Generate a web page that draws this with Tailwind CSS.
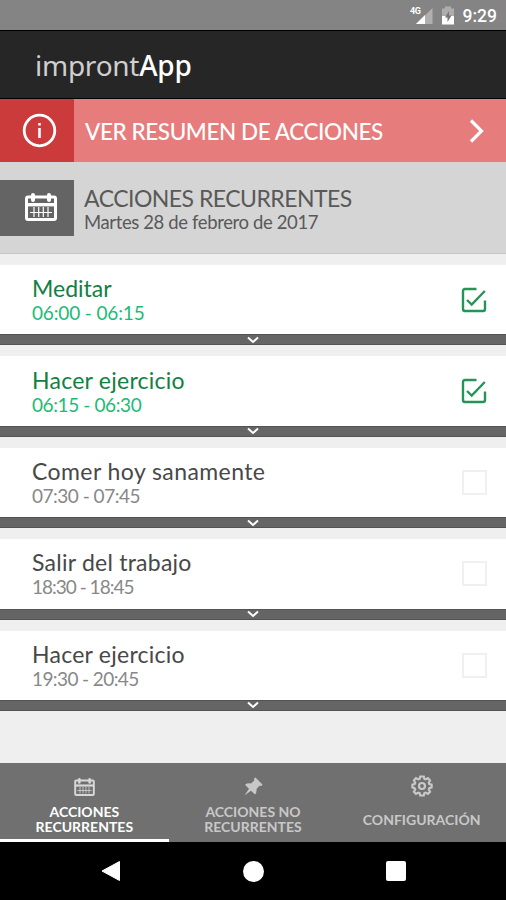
<!DOCTYPE html>
<html lang="es">
<head>
<meta charset="utf-8">
<title>improntApp</title>
<script src="https://cdn.jsdelivr.net/npm/@tailwindcss/browser@4"></script>
</head>
<body class="bg-[#efefef]">
<svg class="hidden">
  <symbol id="cal" viewBox="0 0 32 28">
    <rect x="1.500" y="4" width="29" height="22.500" rx="1.500" fill="none" stroke="currentColor" stroke-width="3"/>
    <path d="M8 2v5M24 2v5" stroke="currentColor" stroke-width="4" stroke-linecap="round"/>
    <path d="M2 11.700h28" stroke="currentColor" stroke-width="3.400"/>
    <path d="M5 19.500h22M9 14v10M13.700 14v10M18.300 14v10M23 14v10" stroke="currentColor" stroke-width="1.200"/>
  </symbol>
  <symbol id="done" viewBox="0 0 26 26">
    <path d="M15.500 2H4Q2 2 2 4V22Q2 24 4 24H22Q24 24 24 22V13.500" fill="none" stroke="currentColor" stroke-width="2.400"/>
    <path d="M6 13l4.700 4.500L23.800 4" fill="none" stroke="currentColor" stroke-width="2.400"/>
  </symbol>
  <symbol id="down" viewBox="0 0 12 8">
    <path d="M1 1.500l5 4.500 5-4.500" fill="none" stroke="#fff" stroke-width="2"/>
  </symbol>
</svg>
<div class="flex h-[900px] w-[506px] flex-col overflow-hidden bg-[#efefef] font-['Lato',sans-serif] whitespace-nowrap">
  <div class="flex h-[30px] shrink-0 items-center justify-end bg-[#848484] pr-[9px] text-white">
    <svg class="mr-[9px] h-[20px] w-[24px]" viewBox="0 0 24 20">
      <path d="M7 19L23.500 3V19z" fill="#b0b0b0"/><path d="M7 19l9-9v9z" fill="#fff"/>
      <text x="1" y="9" font-family="Roboto" font-weight="700" font-size="9" fill="#fff" textLength="11">4G</text>
    </svg>
    <svg class="mr-[9px] h-[19px] w-[12px]" viewBox="0 0 12 19">
      <path d="M0 2.500h3V0.500h6v2h3V10H0z" fill="#adadad"/><path d="M0 10h12v8.500H0z" fill="#fff"/><path d="M7 5L3 11.500h2.500V16l4-6.500H7z" fill="#777"/>
    </svg>
    <span class="mt-[2px] font-['Roboto',sans-serif] text-[17.500px] font-medium">9:29</span>
  </div>
  <header class="flex h-[69px] shrink-0 items-center border-y border-black bg-[#262626] pl-[35px] text-[28px] text-[#cfcfcf]">
    <h1 class="font-['Noto_Sans',sans-serif] tracking-[-0.250px]">impront<span class="font-medium text-white">App</span></h1>
  </header>
  <div class="flex h-[63px] shrink-0 bg-[#e67c7c] text-white">
    <div class="flex w-[74px] items-center justify-end bg-[#cb3b3b] pr-[17px]">
      <svg class="size-[35px]" viewBox="0 0 35 35"><circle cx="17.500" cy="17.500" r="15.300" fill="none" stroke="#fff" stroke-width="2.800"/><path d="M17.500 15v10M17.500 10v2.500" stroke="#fff" stroke-width="2.600"/></svg>
    </div>
    <span class="flex grow items-center pt-[2px] pl-[11px] text-[22.500px] font-medium tracking-[-0.420px]">VER RESUMEN DE ACCIONES</span>
    <svg class="mt-[19px] mr-[22px] h-[26px] w-[15px]" viewBox="0 0 15 26"><path d="M2 2.500L12.500 13 2 23.500" fill="none" stroke="#fff" stroke-width="3.200"/></svg>
  </div>
  <section class="flex h-[92px] shrink-0 border-b border-[#c6c6c6] bg-[#d5d5d5] pt-[18px] text-[#595959]">
    <div class="flex h-[56px] w-[74px] items-center justify-end bg-[#646464] pr-[17px] text-white">
      <svg class="mb-[3px] h-[28px] w-[32px]"><use href="#cal"/></svg>
    </div>
    <div class="pl-[10px]">
      <h2 class="mt-[5px] text-[23px] leading-[27px] tracking-[-0.520px]">ACCIONES RECURRENTES</h2>
      <p class="text-[18.500px] leading-[21px] tracking-[-0.380px]">Martes 28 de febrero de 2017</p>
    </div>
  </section>
  <main class="flex grow flex-col gap-[11px] pt-[11px]">
    <article class="h-[80.400px] bg-white">
      <div class="flex h-[69.400px] items-center justify-between pr-[19px] pl-[32px]">
        <div class="pt-[2px] text-[#128043]"><h3 class="text-[23px] leading-[25px]">Meditar</h3><p class="text-[19px] leading-[24px] tracking-[-0.150px] text-[#1cbb75]">06:00 - 06:15</p></div>
        <svg class="size-[26px] text-[#249457]"><use href="#done"/></svg>
      </div>
      <div class="flex h-[11px] items-center justify-center border-y border-[#535353] bg-[#656565]"><svg class="h-[8px] w-[12px]"><use href="#down"/></svg></div>
    </article>
    <article class="h-[80.400px] bg-white">
      <div class="flex h-[69.400px] items-center justify-between pr-[19px] pl-[32px]">
        <div class="pt-[2px] text-[#128043]"><h3 class="text-[23px] leading-[25px] tracking-[0.250px]">Hacer ejercicio</h3><p class="text-[19px] leading-[24px] tracking-[-0.400px] text-[#1cbb75]">06:15 - 06:30</p></div>
        <svg class="size-[26px] text-[#249457]"><use href="#done"/></svg>
      </div>
      <div class="flex h-[11px] items-center justify-center border-y border-[#535353] bg-[#656565]"><svg class="h-[8px] w-[12px]"><use href="#down"/></svg></div>
    </article>
    <article class="h-[80.400px] bg-white">
      <div class="flex h-[69.400px] items-center justify-between pr-[19px] pl-[32px]">
        <div class="pt-[2px] text-[#484848]"><h3 class="text-[23px] leading-[25px] tracking-[0.420px]">Comer hoy sanamente</h3><p class="text-[19px] leading-[24px] tracking-[-0.500px] text-[#888]">07:30 - 07:45</p></div>
        <span class="size-[25px] border-2 border-[#f0f0f0]"></span>
      </div>
      <div class="flex h-[11px] items-center justify-center border-y border-[#535353] bg-[#656565]"><svg class="h-[8px] w-[12px]"><use href="#down"/></svg></div>
    </article>
    <article class="h-[80.400px] bg-white">
      <div class="flex h-[69.400px] items-center justify-between pr-[19px] pl-[32px]">
        <div class="pt-[2px] text-[#484848]"><h3 class="text-[23px] leading-[25px] tracking-[0.240px]">Salir del trabajo</h3><p class="text-[19px] leading-[24px] tracking-[-1px] text-[#888]">18:30 - 18:45</p></div>
        <span class="size-[25px] border-2 border-[#f0f0f0]"></span>
      </div>
      <div class="flex h-[11px] items-center justify-center border-y border-[#535353] bg-[#656565]"><svg class="h-[8px] w-[12px]"><use href="#down"/></svg></div>
    </article>
    <article class="h-[80.400px] bg-white">
      <div class="flex h-[69.400px] items-center justify-between pr-[19px] pl-[32px]">
        <div class="pt-[2px] text-[#484848]"><h3 class="text-[23px] leading-[25px] tracking-[0.250px]">Hacer ejercicio</h3><p class="text-[19px] leading-[24px] tracking-[-0.600px] text-[#888]">19:30 - 20:45</p></div>
        <span class="size-[25px] border-2 border-[#f0f0f0]"></span>
      </div>
      <div class="flex h-[11px] items-center justify-center border-y border-[#535353] bg-[#656565]"><svg class="h-[8px] w-[12px]"><use href="#down"/></svg></div>
    </article>
  </main>
  <nav class="grid h-[79px] shrink-0 grid-cols-3 bg-[#707070] text-center text-[14px] leading-[15px] font-bold text-[#c8c8c8]">
    <div class="flex flex-col items-center border-b-3 border-white pt-[15px] text-white">
      <svg class="h-[18px] w-[21px] text-[#d8d8d8]"><use href="#cal"/></svg>
      <span class="mt-[8px]">ACCIONES<br>RECURRENTES</span>
    </div>
    <div class="flex flex-col items-center pt-[14px]">
      <svg class="h-[19px] w-[20px]" viewBox="0 0 20 19"><path d="M12.500 0.500L19.500 7.500 18.500 9 16.500 8.800 13.500 12Q14 15.500 12 17.500L8 13.700 1.500 18.500 6 11.700 2 7.700Q4.500 5.800 8 6.500L11.300 3.500 11 1.500z" fill="currentColor"/></svg>
      <span class="mt-[8px]">ACCIONES NO<br>RECURRENTES</span>
    </div>
    <div class="flex flex-col items-center pt-[12px]">
      <svg class="size-[22px]" viewBox="0 0 22 22" fill="none" stroke="currentColor" stroke-width="2.200"><circle cx="11" cy="11" r="3"/><path d="M9.200 1.500h3.600l.6 2.400 1.200.5 2.300-1.200 2.100 2.200-1.200 2.300.5 1.300 2.300.6v2.900l-2.300.6-.5 1.300 1.200 2.300-2.100 2.100-2.300-1.200-1.200.5-.6 2.400H9.200l-.6-2.400-1.300-.5L5 18.800l-2.100-2.100 1.300-2.300-.6-1.300-2.200-.6V9.600L3.600 9l.6-1.300-1.300-2.300L5 3.200l2.300 1.200 1.300-.5z"/></svg>
      <span class="mt-[15px]">CONFIGURACIÓN</span>
    </div>
  </nav>
  <div class="flex h-[58px] shrink-0 items-center bg-black">
    <svg class="ml-[101px] size-[20px]" viewBox="0 0 20 20"><path d="M1 10L18.500 0.500V19.500z" fill="#fff" stroke="#fff" stroke-linejoin="round"/></svg>
    <span class="ml-[122px] size-[21px] rounded-full bg-white"></span>
    <span class="ml-[122px] size-[20px] rounded-[2px] bg-white"></span>
  </div>
</div>
</body>
</html>
